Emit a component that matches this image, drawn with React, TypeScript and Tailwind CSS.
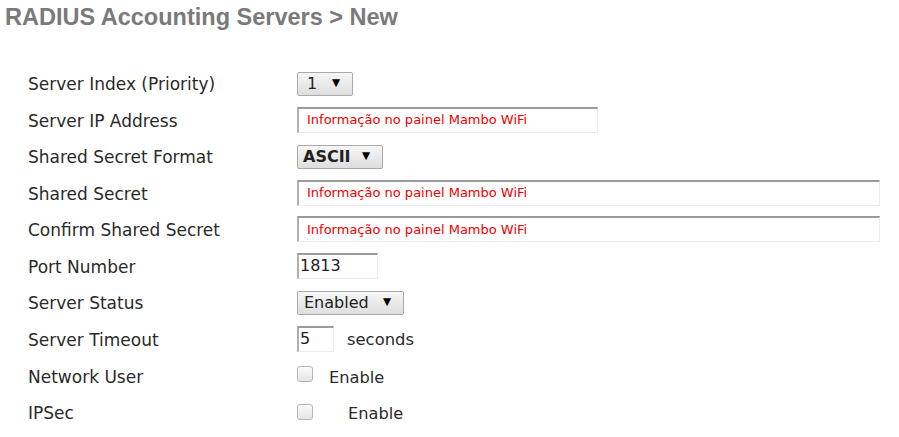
import React from "react";

const labelFont = { fontFamily: '"DejaVu Sans", Verdana, sans-serif' };

function Row({ label, children }: { label: string; children: React.ReactNode }) {
  return (
    <div className="flex items-center h-[36.56px]">
      <div className="w-[269px] shrink-0 text-[17px] text-[#2a2a2a] whitespace-nowrap pt-[2px]" style={labelFont}>
        {label}
      </div>
      <div className="flex items-center">{children}</div>
    </div>
  );
}

function Select({ text, width, bold, pl }: { text: string; width: number; bold?: boolean; pl: number }) {
  return (
    <div
      className="flex items-center justify-between h-[24px] border border-[#a9a9a9] rounded-[2px] bg-gradient-to-b from-[#f6f6f6] to-[#dedede] pr-[12px] text-[16px] text-[#222]"
      style={{ ...labelFont, width, paddingLeft: pl }}
    >
      <span className={bold ? "font-bold" : ""}>{text}</span>
      <span className="text-[10.5px] text-black leading-none -mt-[3px]">▼</span>
    </div>
  );
}

function TextInput({ value, width, red }: { value: string; width: number; red?: boolean }) {
  return (
    <div
      className={`flex items-center h-[26px] -mt-[2px] border-t-[2px] border-l-[2px] border-r border-b border-t-[#9a9a9a] border-l-[#b0b0b0] border-r-[#ececec] border-b-[#ececec] bg-white whitespace-nowrap ${
        red ? "pl-[8px] text-[13px] text-[#ee0000]" : "pl-[1px] text-[16px] text-[#222]"
      }`}
      style={{ ...labelFont, width }}
    >
      {value}
    </div>
  );
}

function Checkbox() {
  return (
    <div className="w-[16px] h-[16px] rounded-[3px] border border-[#b5b5b5] bg-gradient-to-b from-[#fbfbfb] to-[#e4e4e4]" />
  );
}

export default function App() {
  const info = "Informação no painel Mambo WiFi";
  return (
    <div className="w-[899px] h-[437px] bg-white overflow-hidden">
      <div
        className="pl-[5px] pt-[4px] h-[30px] text-[23.5px] leading-[26px] font-bold text-[#7a7a7a] whitespace-nowrap"
        style={{ fontFamily: '"Liberation Sans", Arial, sans-serif' }}
      >
        RADIUS Accounting Servers &gt; New
      </div>
      <div className="pl-[28px] pt-[35.7px] flex flex-col">
        <Row label="Server Index (Priority)">
          <Select text="1" width={56} pl={9} />
        </Row>
        <Row label="Server IP Address">
          <TextInput value={info} width={301} red />
        </Row>
        <Row label="Shared Secret Format">
          <Select text="ASCII" width={86} bold pl={5} />
        </Row>
        <Row label="Shared Secret">
          <TextInput value={info} width={583} red />
        </Row>
        <Row label="Confirm Shared Secret">
          <TextInput value={info} width={583} red />
        </Row>
        <Row label="Port Number">
          <TextInput value="1813" width={81} />
        </Row>
        <Row label="Server Status">
          <Select text="Enabled" width={107} pl={6} />
        </Row>
        <Row label="Server Timeout">
          <TextInput value="5" width={37} />
          <span className="ml-[13px] text-[16.4px] text-[#2a2a2a] pt-[1px]" style={labelFont}>
            seconds
          </span>
        </Row>
        <Row label="Network User">
          <div className="flex items-center">
            <div className="-mt-[5px]">
              <Checkbox />
            </div>
            <span className="ml-[16px] text-[16.2px] text-[#2a2a2a] pt-[3px]" style={labelFont}>
              Enable
            </span>
          </div>
        </Row>
        <Row label="IPSec">
          <div className="flex items-center">
            <div className="-mt-[2px]">
              <Checkbox />
            </div>
            <span className="ml-[35px] text-[16.2px] text-[#2a2a2a] pt-[3px]" style={labelFont}>
              Enable
            </span>
          </div>
        </Row>
      </div>
    </div>
  );
}
